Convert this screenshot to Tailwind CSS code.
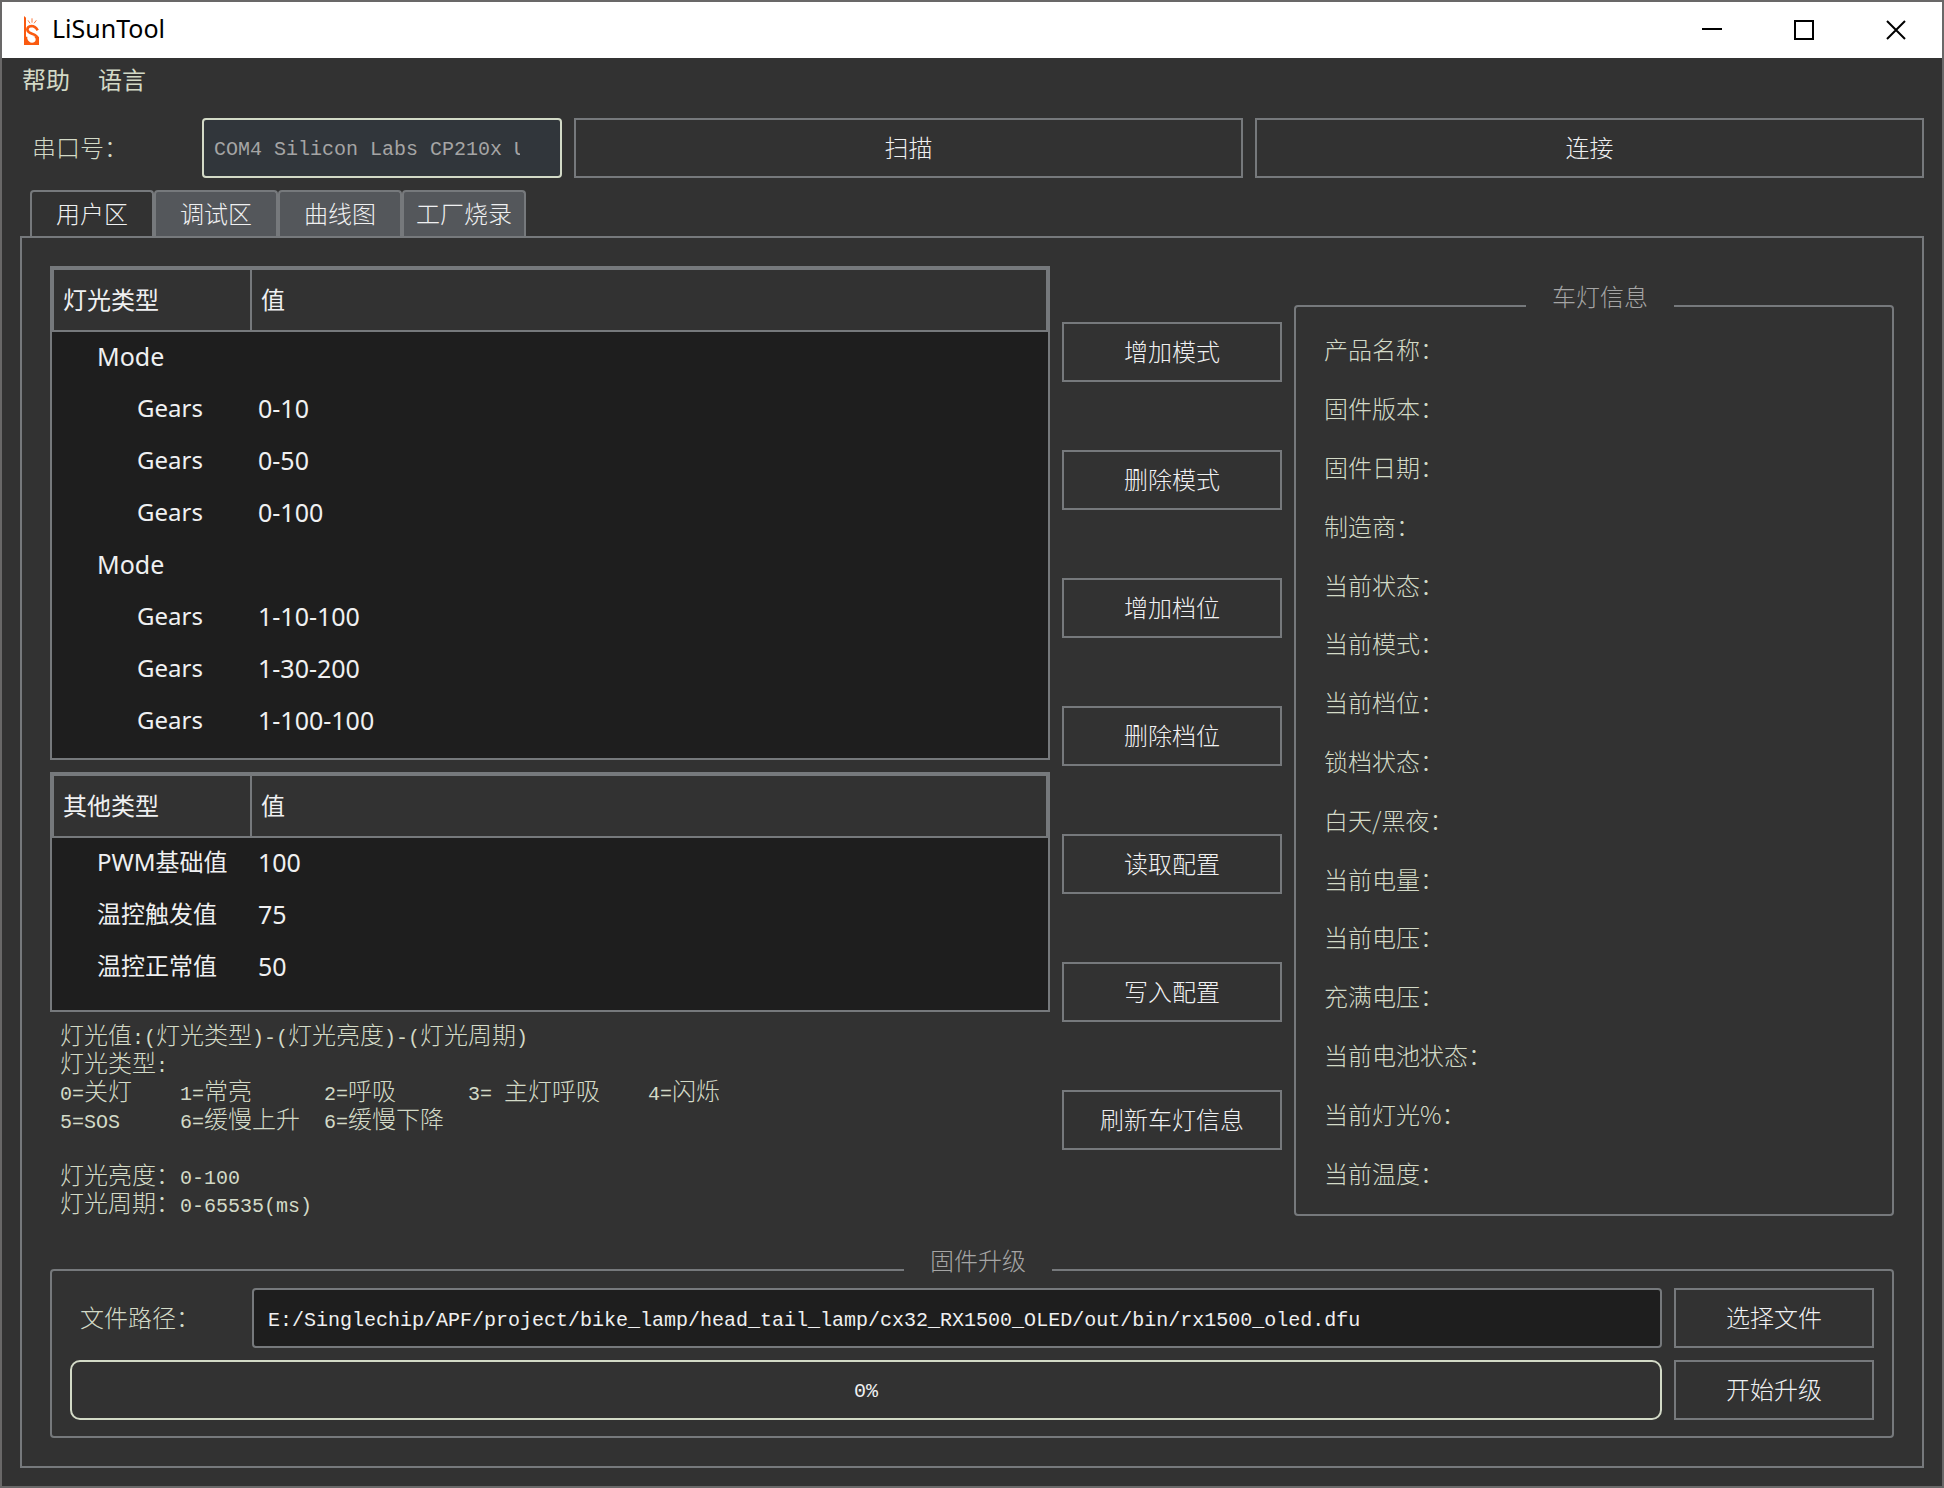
<!DOCTYPE html>
<html lang="zh-CN">
  <head>
    <meta charset="UTF-8" />
    <meta name="viewport" content="width=device-width, initial-scale=1.0" />
    <title>LiSunTool</title>
    <script src="https://cdn.jsdelivr.net/npm/@tailwindcss/browser@4"></script>
  </head>

  <body class="bg-[#323232]">
    <div class="flex min-h-screen flex-col border-2 border-[#696868] bg-[#323232] font-['Noto_Sans_CJK_SC',sans-serif] text-2xl font-light text-[#d3dac7]">
      <!-- Title bar -->
      <header class="flex h-14 items-center bg-white pl-[22px] font-['Noto_Sans',sans-serif] font-normal text-black">
        <svg class="h-[29px] w-[15px]" viewBox="0 0 45 87" fill="none">
          <path d="M0 0L6 5V62H45V87H0Z" fill="#fa5a10" />
          <path d="M41 43Q34 30 22 30Q10 31 10 41Q11 49 24 53Q41 58 41 70" stroke="#fa5a10" stroke-width="8" />
          <path d="M10 60Q16 57 26 60Q36 64 35 72Q33 80 24 80Q14 79 10 68Z" fill="#fff" />
          <path d="M12 13L18 22M24 7V20M37 13L30 22" stroke="#fa7a40" stroke-width="3" />
        </svg>
        <h1 class="ml-[13px] pb-[2px] text-[25px]">LiSunTool</h1>
        <div class="ml-auto flex h-full">
          <button class="flex w-[92px] items-center justify-center" aria-label="最小化">
            <svg class="h-5 w-5" viewBox="0 0 20 20" stroke="#000" stroke-width="2"><path d="M0 9H20" /></svg>
          </button>
          <button class="flex w-[92px] items-center justify-center" aria-label="最大化">
            <svg class="h-5 w-5" viewBox="0 0 20 20" fill="none" stroke="#000" stroke-width="2"><path d="M1 1H19V19H1Z" /></svg>
          </button>
          <button class="flex w-[92px] items-center justify-center" aria-label="关闭">
            <svg class="h-5 w-5" viewBox="0 0 20 20" stroke="#000" stroke-width="2"><path d="M1 1L19 19M19 1L1 19" /></svg>
          </button>
        </div>
      </header>

      <!-- Menu -->
      <nav class="flex h-11 items-center gap-7 px-5 pb-[2px] font-normal">
        <button>帮助</button>
        <button>语言</button>
      </nav>

      <main class="flex flex-1 flex-col px-[18px] pt-4 pb-[18px] [&_button]:pb-[2px]">
        <!-- Serial port -->
        <div class="flex items-center gap-3">
          <label for="port" class="w-[170px] pb-[2px] pl-3">串口号：</label>
          <select id="port" class="h-[60px] w-[360px] appearance-none rounded-sm border-2 border-[#d3dac7] bg-[#31363b] pt-1 pr-10 pl-[10px] font-['Liberation_Mono',monospace] text-xl font-normal text-[#a5a5a5]">
            <option>COM4 Silicon Labs CP210x U</option>
          </select>
          <button class="h-[60px] flex-1 border-2 border-[#76797c] text-[#eff0f1]">扫描</button>
          <button class="h-[60px] flex-1 border-2 border-[#76797c] text-[#eff0f1]">连接</button>
        </div>

        <!-- Tabs -->
        <div class="mt-3 flex h-[46px] pl-[10px] text-[#eff0f1]" role="tablist">
          <button role="tab" aria-selected="true" class="w-[124px] rounded-t-sm border-2 border-b-0 border-[#76797c]">用户区</button>
          <button role="tab" class="w-[124px] rounded-t-sm border-2 border-b-0 border-[#76797c] bg-[#54575b]">调试区</button>
          <button role="tab" class="w-[124px] rounded-t-sm border-2 border-b-0 border-[#76797c] bg-[#54575b]">曲线图</button>
          <button role="tab" class="w-[124px] rounded-t-sm border-2 border-b-0 border-[#76797c] bg-[#54575b]">工厂烧录</button>
        </div>

        <section class="flex flex-1 flex-col border-2 border-[#76797c] p-7">
          <div class="grid flex-1 grid-cols-[5fr_220px_3fr] gap-3">
            <!-- Config tables -->
            <div class="flex flex-col">
              <div class="border-2 border-[#76797c] bg-[#1e1e1e] pb-[10px] font-['Noto_Sans','Noto_Sans_CJK_SC',sans-serif] font-normal text-[#eff0f1]">
                <table class="w-full table-fixed border-separate border-spacing-0 text-left">
                  <thead>
                    <tr class="h-16 bg-[#323232]">
                      <th class="w-[200px] border-2 border-[#76797c] pl-[9px] font-normal">灯光类型</th>
                      <th class="border-2 border-l-0 border-[#76797c] pl-[9px] font-normal">值</th>
                    </tr>
                  </thead>
                  <tbody class="leading-8 [&_td]:pb-1">
                    <tr class="h-[52px]"><td class="pl-[45px] text-[25px]">Mode</td><td></td></tr>
                    <tr class="h-[52px]"><td class="pl-[85px]">Gears</td><td class="pl-[6px] text-[25px]">0-10</td></tr>
                    <tr class="h-[52px]"><td class="pl-[85px]">Gears</td><td class="pl-[6px] text-[25px]">0-50</td></tr>
                    <tr class="h-[52px]"><td class="pl-[85px]">Gears</td><td class="pl-[6px] text-[25px]">0-100</td></tr>
                    <tr class="h-[52px]"><td class="pl-[45px] text-[25px]">Mode</td><td></td></tr>
                    <tr class="h-[52px]"><td class="pl-[85px]">Gears</td><td class="pl-[6px] text-[25px]">1-10-100</td></tr>
                    <tr class="h-[52px]"><td class="pl-[85px]">Gears</td><td class="pl-[6px] text-[25px]">1-30-200</td></tr>
                    <tr class="h-[52px]"><td class="pl-[85px]">Gears</td><td class="pl-[6px] text-[25px]">1-100-100</td></tr>
                  </tbody>
                </table>
              </div>

              <div class="mt-3 border-2 border-[#76797c] bg-[#1e1e1e] pb-4 font-['Noto_Sans','Noto_Sans_CJK_SC',sans-serif] font-normal text-[#eff0f1]">
                <table class="w-full table-fixed border-separate border-spacing-0 text-left">
                  <thead>
                    <tr class="h-16 bg-[#323232]">
                      <th class="w-[200px] border-2 border-[#76797c] pl-[9px] font-normal">其他类型</th>
                      <th class="border-2 border-l-0 border-[#76797c] pl-[9px] font-normal">值</th>
                    </tr>
                  </thead>
                  <tbody class="leading-8 [&_td]:pb-1">
                    <tr class="h-[52px]"><td class="pl-[45px] whitespace-nowrap">PWM基础值</td><td class="pl-[6px] text-[25px]">100</td></tr>
                    <tr class="h-[52px]"><td class="pl-[45px] whitespace-nowrap">温控触发值</td><td class="pl-[6px] text-[25px]">75</td></tr>
                    <tr class="h-[52px]"><td class="pl-[45px] whitespace-nowrap">温控正常值</td><td class="pl-[6px] text-[25px]">50</td></tr>
                  </tbody>
                </table>
              </div>

              <!-- Value format help -->
              <div class="mt-2 pl-[10px] leading-7 whitespace-nowrap [&_b]:font-['Liberation_Mono',monospace] [&_b]:text-xl [&_b]:leading-none [&_b]:font-normal">
                <p class="h-7">灯光值<b>:(</b>灯光类型<b>)-(</b>灯光亮度<b>)-(</b>灯光周期<b>)</b></p>
                <p class="h-7">灯光类型<b>:</b></p>
                <div class="grid auto-rows-[28px] grid-cols-[120px_144px_144px_180px_1fr]">
                  <span><b>0=</b>关灯</span>
                  <span><b>1=</b>常亮</span>
                  <span><b>2=</b>呼吸</span>
                  <span><b>3= </b>主灯呼吸</span>
                  <span><b>4=</b>闪烁</span>
                  <span><b>5=SOS</b></span>
                  <span><b>6=</b>缓慢上升</span>
                  <span><b>6=</b>缓慢下降</span>
                </div>
                <p class="mt-7 h-7">灯光亮度：<b>0-100</b></p>
                <p class="h-7">灯光周期：<b>0-65535(ms)</b></p>
              </div>
            </div>

            <!-- Actions -->
            <div class="flex flex-col justify-between pt-14 pb-[66px] text-[#eff0f1]">
              <button class="h-[60px] border-2 border-[#76797c]">增加模式</button>
              <button class="h-[60px] border-2 border-[#76797c]">删除模式</button>
              <button class="h-[60px] border-2 border-[#76797c]">增加档位</button>
              <button class="h-[60px] border-2 border-[#76797c]">删除档位</button>
              <button class="h-[60px] border-2 border-[#76797c]">读取配置</button>
              <button class="h-[60px] border-2 border-[#76797c]">写入配置</button>
              <button class="h-[60px] border-2 border-[#76797c]">刷新车灯信息</button>
            </div>

            <!-- Lamp info -->
            <fieldset class="mt-4 flex flex-col rounded-sm border-2 border-[#76797c] pb-3 pl-3">
              <legend class="mx-auto px-[26px] pb-5 leading-7 text-[#a5a5a5]">车灯信息</legend>
              <ul class="-mt-[10px] flex flex-1 flex-col pl-4 *:flex *:flex-1 *:items-center">
                <li>产品名称：</li>
                <li>固件版本：</li>
                <li>固件日期：</li>
                <li>制造商：</li>
                <li>当前状态：</li>
                <li>当前模式：</li>
                <li>当前档位：</li>
                <li>锁档状态：</li>
                <li>白天/黑夜：</li>
                <li>当前电量：</li>
                <li>当前电压：</li>
                <li>充满电压：</li>
                <li>当前电池状态：</li>
                <li>当前灯光%：</li>
                <li>当前温度：</li>
              </ul>
            </fieldset>
          </div>

          <!-- Firmware upgrade -->
          <fieldset class="mt-[30px] rounded-sm border-2 border-[#76797c] pb-4 pl-3">
            <legend class="mx-auto px-[26px] pb-5 leading-7 text-[#a5a5a5]">固件升级</legend>
            <div class="-mt-[6px] grid grid-cols-[1fr_200px] gap-3 pr-[18px] pl-[6px]">
              <div class="flex items-center">
                <label for="path" class="w-[182px] pb-[2px] pl-[10px]">文件路径：</label>
                <input id="path" type="text" value="E:/Singlechip/APF/project/bike_lamp/head_tail_lamp/cx32_RX1500_OLED/out/bin/rx1500_oled.dfu" class="h-[60px] min-w-0 flex-1 rounded-sm border-2 border-[#76797c] bg-[#1e1e1e] px-[14px] pt-1 font-['Liberation_Mono',monospace] text-xl font-normal text-[#eff0f1]" />
              </div>
              <button class="h-[60px] border-2 border-[#76797c] text-[#eff0f1]">选择文件</button>
              <div role="progressbar" aria-valuenow="0" class="flex h-[60px] items-center justify-center rounded-[10px] border-2 border-[#d3dac7] pt-1 font-['Liberation_Mono',monospace] text-xl font-normal text-[#eff0f1]">0%</div>
              <button class="h-[60px] border-2 border-[#76797c] text-[#eff0f1]">开始升级</button>
            </div>
          </fieldset>
        </section>
      </main>
    </div>
  </body>
</html>
